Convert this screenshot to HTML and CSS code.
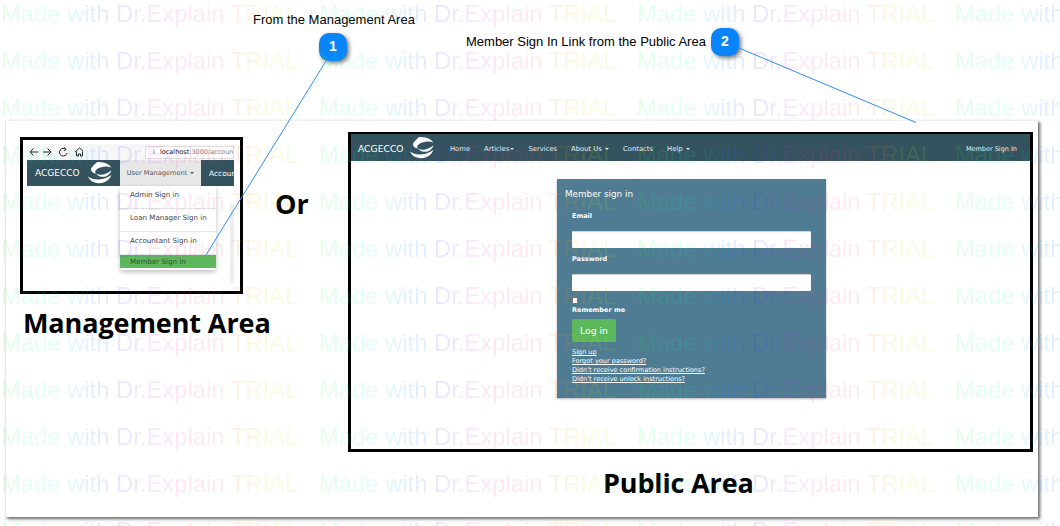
FILE: index.html
```html
<!DOCTYPE html>
<html lang="en">
<head>
<meta charset="utf-8">
<title>Member Sign In</title>
<link rel="stylesheet" href="styles.css">
</head>
<body>
<svg class="defs" width="0" height="0" aria-hidden="true">
  <symbol id="logo" viewBox="0 0 24 22">
    <path d="M9 0C15 0 20 1 23.500 5.500C18 3.500 11 5 8 8C7 9 7 10 8 11.500C3 11 1.500 7 5 4C6 3 8 1 9 0Z"/>
    <path d="M8 11.500C13 14 18 12.500 23.500 8.500C21 15.500 12 17 8 11.500Z"/>
    <path d="M0 14.500C6 19 15 18.500 23.500 13C21 19 15 22 9 21C5 20.500 1.500 18 0 14.500Z"/>
  </symbol>
</svg>
<div class="page">
  <header class="top">
    <div class="label label-one">From the Management Area</div>
    <div class="pin pin-one">1</div>
    <div class="label label-two">Member Sign In Link from the Public Area</div>
    <div class="pin pin-two">2</div>
  </header>
  <main class="card">
    <section class="left">
      <div class="shot">
        <div class="browser">
          <svg class="tools" width="54" height="12" viewBox="0 0 54 12">
            <path d="M9 6H1M4.500 2.500L1 6l3.500 3.500M14 6h8m-3.500-3.500L22 6l-3.500 3.500"/>
            <path d="M37 3.500A3.800 3.800 0 1 0 38 7M35 1.500l2.200 2-2.400 1.200"/>
            <path d="M46 6l4.500-4 4.500 4M47.500 5.500V10h2V8h2v2h2V5.500"/>
          </svg>
          <div class="url"><span class="info">i</span><b>localhost</b><span class="rest">:3000/account</span></div>
        </div>
        <nav class="mini-nav">
          <span class="mini-brand">ACGECCO</span>
          <svg class="mini-logo"><use href="#logo"/></svg>
          <span class="mini-active">User Management <i class="caret"></i></span>
          <span class="mini-next">Accoun</span>
        </nav>
        <div class="mini-body">
          <ul class="menu">
            <li>Admin Sign in</li>
            <li>Loan Manager Sign in</li>
            <li>Accountant Sign in</li>
            <li class="menu-on">Member Sign in</li>
          </ul>
          <div class="scroll"></div>
        </div>
      </div>
      <h2 class="area-left">Management Area</h2>
    </section>
    <div class="or">Or</div>
    <section class="right">
      <div class="site">
        <nav class="site-nav">
          <span class="brand">ACGECCO</span>
          <svg class="site-logo"><use href="#logo"/></svg>
          <a>Home</a>
          <a>Articles<i class="caret"></i></a>
          <a>Services</a>
          <a>About Us <i class="caret"></i></a>
          <a>Contacts</a>
          <a>Help <i class="caret"></i></a>
          <a class="sign">Member Sign In</a>
        </nav>
        <div class="site-body">
          <form class="panel">
            <div class="panel-title">Member sign in</div>
            <div class="fields">
              <div class="field-label">Email</div>
              <div class="input"></div>
              <div class="field-label">Password</div>
              <div class="input"></div>
              <div class="check"></div>
              <div class="field-label remember">Remember me</div>
              <div class="btn">Log in</div>
              <div class="links">
                <a>Sign up</a>
                <a>Forgot your password?</a>
                <a>Didn't receive confirmation instructions?</a>
                <a>Didn't receive unlock instructions?</a>
              </div>
            </div>
          </form>
        </div>
      </div>
      <h2 class="area-right">Public Area</h2>
    </section>
  </main>
  <svg class="lines" width="1060" height="526" viewBox="0 0 1060 526" aria-hidden="true">
    <line x1="326" y1="61" x2="206" y2="255"/>
    <line x1="739" y1="48" x2="916" y2="122.500"/>
  </svg>
  <div class="marks" aria-hidden="true">
    <span>Made with Dr.Explain TRIAL</span><span>Made with Dr.Explain TRIAL</span><span>Made with Dr.Explain TRIAL</span><span>Made with Dr.Explain TRIAL</span>
    <span>Made with Dr.Explain TRIAL</span><span>Made with Dr.Explain TRIAL</span><span>Made with Dr.Explain TRIAL</span><span>Made with Dr.Explain TRIAL</span>
    <span>Made with Dr.Explain TRIAL</span><span>Made with Dr.Explain TRIAL</span><span>Made with Dr.Explain TRIAL</span><span>Made with Dr.Explain TRIAL</span>
    <span>Made with Dr.Explain TRIAL</span><span>Made with Dr.Explain TRIAL</span><span>Made with Dr.Explain TRIAL</span><span>Made with Dr.Explain TRIAL</span>
    <span>Made with Dr.Explain TRIAL</span><span>Made with Dr.Explain TRIAL</span><span>Made with Dr.Explain TRIAL</span><span>Made with Dr.Explain TRIAL</span>
    <span>Made with Dr.Explain TRIAL</span><span>Made with Dr.Explain TRIAL</span><span>Made with Dr.Explain TRIAL</span><span>Made with Dr.Explain TRIAL</span>
    <span>Made with Dr.Explain TRIAL</span><span>Made with Dr.Explain TRIAL</span><span>Made with Dr.Explain TRIAL</span><span>Made with Dr.Explain TRIAL</span>
    <span>Made with Dr.Explain TRIAL</span><span>Made with Dr.Explain TRIAL</span><span>Made with Dr.Explain TRIAL</span><span>Made with Dr.Explain TRIAL</span>
    <span>Made with Dr.Explain TRIAL</span><span>Made with Dr.Explain TRIAL</span><span>Made with Dr.Explain TRIAL</span><span>Made with Dr.Explain TRIAL</span>
    <span>Made with Dr.Explain TRIAL</span><span>Made with Dr.Explain TRIAL</span><span>Made with Dr.Explain TRIAL</span><span>Made with Dr.Explain TRIAL</span>
    <span>Made with Dr.Explain TRIAL</span><span>Made with Dr.Explain TRIAL</span><span>Made with Dr.Explain TRIAL</span><span>Made with Dr.Explain TRIAL</span>
    <span>Made with Dr.Explain TRIAL</span><span>Made with Dr.Explain TRIAL</span><span>Made with Dr.Explain TRIAL</span><span>Made with Dr.Explain TRIAL</span>
  </div>
</div>
</body>
</html>
```
FILE: styles.css
```css
* { box-sizing: border-box; }
html, body { margin: 0; padding: 0; background: #fff; }
.defs { position: absolute; }
.page {
  position: relative;
  width: 1060px;
  height: 526px;
  overflow: hidden;
  background: #fff;
  font-family: "DejaVu Sans", sans-serif;
  color: #000;
}

/* callouts on the free canvas */
.top { height: 120px; }
.label {
  position: absolute;
  font: 13px/14px "Liberation Sans", sans-serif;
  white-space: nowrap;
}
.label-one { left: 253px; top: 13px; }
.label-two { left: 466px; top: 35px; }
.pin {
  position: absolute;
  width: 28px;
  height: 28px;
  border-radius: 10px;
  background: #0a84fb;
  box-shadow: 2px 2px 4px rgba(0, 0, 0, .55);
  color: #fff;
  font: bold 14px/27px "Liberation Sans", sans-serif;
  text-align: center;
}
.pin-one { left: 319px; top: 33px; }
.pin-two { left: 711px; top: 28px; }
.lines { position: absolute; left: 0; top: 0; }
.lines line { stroke: #2b8ef5; stroke-width: 1; }

/* main card */
.card {
  display: flex;
  width: 1033px;
  height: 397px;
  margin-left: 5px;
  padding: 11px 0 0 14px;
  background: #fff;
  border-left: 1px solid #e8e8e8;
  border-top: 1px solid #efefef;
  box-shadow: 2px 2px 3px rgba(0, 0, 0, .6);
}
.left { width: 256px; flex: none; padding-top: 5px; }
.shot {
  width: 223px;
  height: 157px;
  border: 3px solid #000;
  padding: 3px 6px 0 4px;
  overflow: hidden;
}
.browser {
  display: flex;
  align-items: center;
  height: 17px;
  background: #f7f7f7;
  border-top: 1px solid #fff;
  padding-left: 2px;
}
.tools { flex: none; }
.tools path { fill: none; stroke: #222; stroke-width: 1; }
.url {
  flex: none;
  width: 89px;
  height: 13px;
  margin-left: auto;
  border: 1px solid #ddd;
  background: #fff;
  font: 6.500px/11px "DejaVu Sans", sans-serif;
  white-space: nowrap;
  overflow: hidden;
  padding-left: 4px;
  color: #333;
}
.url b { font-weight: normal; color: #111; }
.url .rest { color: #888; }
.info { display: inline-block; width: 8px; margin-right: 2px; text-align: center; }
.mini-nav {
  display: flex;
  align-items: center;
  height: 26px;
  background: #34535f;
  color: #fff;
  white-space: nowrap;
  overflow: hidden;
}
.mini-brand { font-size: 9px; margin-left: 8px; width: 53px; flex: none; }
.mini-logo { width: 24px; height: 22px; fill: #fff; flex: none; }
.mini-active {
  display: block;
  flex: none;
  width: 81px;
  height: 26px;
  margin-left: 8px;
  background: #e7e7e7;
  color: #555;
  font-size: 6.600px;
  line-height: 26px;
  text-align: center;
}
.mini-next { margin-left: 8px; font-size: 7.500px; }
.caret {
  display: inline-block;
  width: 0;
  height: 0;
  margin-left: 1px;
  vertical-align: middle;
  border-top: 2px solid currentColor;
  border-left: 2px solid transparent;
  border-right: 2px solid transparent;
}
.mini-body { display: flex; align-items: flex-start; }
.menu {
  list-style: none;
  width: 96px;
  margin: 0 0 0 93px;
  padding: 0;
  background: #fff;
  box-shadow: 0 2px 5px rgba(0, 0, 0, .25);
  border-radius: 0 0 3px 3px;
  font-size: 7.100px;
  color: #444;
}
.menu li {
  height: 23px;
  line-height: 17px;
  padding-left: 10px;
  border-bottom: 1px solid #e6e6e6;
  white-space: nowrap;
}
.menu .menu-on {
  height: 13px;
  line-height: 13px;
  margin: 0 0 2px;
  border: 0;
  background: #5cb85c;
  color: #2d4f2d;
}
.scroll { width: 4px; height: 80px; margin: 17px 0 0 14px; background: #eee; }
.area-left {
  margin: 11px 0 0 3px;
  font: bold 27px/36px "Open Sans", sans-serif;
  letter-spacing: -.1px;
  white-space: nowrap;
}
.or {
  flex: none;
  width: 72px;
  padding-top: 54px;
  margin-left: -1px;
  margin-right: 1px;
  font: bold 27px/36px "Open Sans", sans-serif;
}
.right { flex: none; width: 684px; }
.site {
  width: 685px;
  height: 320px;
  border: 3px solid #000;
  border-top-width: 2px;
}
.site-nav {
  display: flex;
  align-items: center;
  height: 27px;
  background: #34535f;
  color: #e8eef0;
  font-size: 6.800px;
  white-space: nowrap;
  padding: 2px 0 0 7px;
}
.brand { font-size: 9.200px; color: #fff; width: 52px; flex: none; }
.site-logo { width: 24px; height: 22px; margin-bottom: 2px; fill: #fff; flex: none; margin-right: 16px; }
.site-nav a { margin-right: 14px; }
.site-nav .sign { margin: 0 13px 0 auto; font-size: 6.500px; }
.site-body { display: flex; justify-content: center; padding: 18px 0 0 2px; }
.panel {
  width: 269px;
  height: 219px;
  background: #4f7c93;
  box-shadow: 0 1px 2px rgba(0, 0, 0, .3);
  color: #fff;
  padding: 10px 0 0 8px;
}
.panel-title { font-size: 8.800px; line-height: 11px; }
.fields { width: 246px; padding: 11px 0 0 7px; }
.field-label { font-size: 6.500px; font-weight: bold; line-height: 10px; }
.input {
  width: 239px;
  height: 17px;
  margin: 10px 0 6px;
  background: #fff;
  border-radius: 1px;
  box-shadow: inset 0 1px 1px rgba(0, 0, 0, .2);
}
.check {
  width: 6px;
  height: 7px;
  margin-top: 3px;
  background: #fff;
  border: 1px solid #777;
}
.remember { margin-top: 1px; }
.btn {
  width: 44px;
  height: 23px;
  margin-top: 4px;
  background: #5cb85c;
  border-radius: 2px;
  font-size: 9.300px;
  line-height: 23px;
  text-align: center;
}
.links { display: flex; flex-direction: column; margin-top: 6px; font-size: 6.550px; line-height: 9px; }
.links a { text-decoration: underline; white-space: nowrap; }
.area-right {
  margin: 13px 0 0 255px;
  font: bold 27px/36px "Open Sans", sans-serif;
  letter-spacing: -.15px;
  white-space: nowrap;
}

/* watermark over everything */
.marks {
  position: absolute;
  left: 1px;
  top: -10px;
  display: grid;
  grid-template-columns: repeat(4, 318px);
  grid-auto-rows: 47px;
  pointer-events: none;
  opacity: .11;
}
.marks span {
  justify-self: start;
  font: 23.800px/47px "Liberation Sans", sans-serif;
  white-space: nowrap;
  color: transparent;
  background: linear-gradient(90deg, #00ff30 0%, #00ffc0 17%, #0090ff 28%, #3030ff 40%, #d020ff 50%, #ff3090 62%, #ff5040 75%, #ffa000 84%, #c0f000 93%, #80f000 100%);
  -webkit-background-clip: text;
  background-clip: text;
}
```
